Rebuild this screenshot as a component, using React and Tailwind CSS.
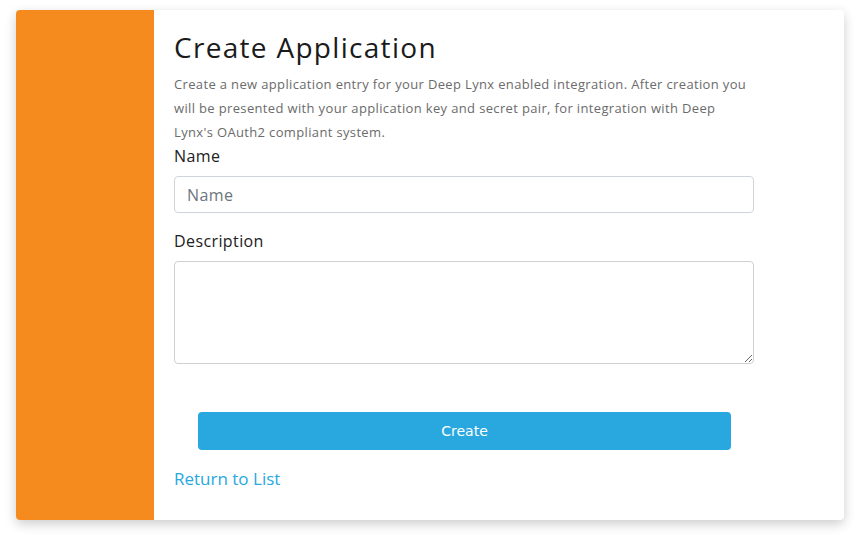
export default function App() {
    return (
        <div className="min-h-[535px] w-full bg-white pt-[10px] pl-[16px] pr-[15px]" style={{ fontFamily: '"Open Sans", sans-serif' }}>
            <div className="flex h-[510px] rounded-[4px] bg-white shadow-[0_4px_12px_rgba(0,0,0,0.2)] overflow-hidden">
                {/* Side stripe */}
                <div className="w-[138px] shrink-0 bg-[#f58b1f]" />

                <div className="flex-1 pl-[20px] pt-[20px]">
                    <div className="w-[580px]">
                        <h1 className="text-[28px] leading-[34px] text-[#1a1a1a] tracking-[1.3px]">Create Application</h1>
                        <p className="mt-[8px] text-[13px] leading-[24px] text-[#6b6b6b] tracking-[0.35px]">
                            Create a new application entry for your Deep Lynx enabled integration. After creation you will be presented with your application key and secret pair, for integration with Deep Lynx's OAuth2 compliant system.
                        </p>

                        <label className="block text-[16px] leading-[24px] text-[#212121] tracking-[0.4px]">Name</label>
                        <input
                            placeholder="Name"
                            className="mt-[8px] block h-[37px] w-full rounded-[4px] border border-[#ced4da] px-[12px] text-[16px] tracking-[0.4px] placeholder:text-[#6c757d] outline-none"
                        />

                        <label className="mt-[16px] block text-[16px] leading-[24px] text-[#212121] tracking-[0.4px]">Description</label>
                        <textarea className="mt-[8px] block h-[103px] w-full rounded-[4px] border border-[#d0d0d0] px-[12px] py-[6px] text-[16px] outline-none" />

                        <div className="px-[24px] pr-[23px] mt-[48px]">
                            <button className="h-[38px] w-full rounded-[4px] bg-[#29a8e0] text-[14px] text-white" style={{ fontFamily: '"DejaVu Sans", sans-serif' }}>
                                Create
                            </button>
                        </div>

                        <a href="#" className="mt-[17px] inline-block text-[17px] leading-[24px] text-[#29a8e0]">Return to List</a>
                    </div>
                </div>
            </div>
        </div>
    );
}
